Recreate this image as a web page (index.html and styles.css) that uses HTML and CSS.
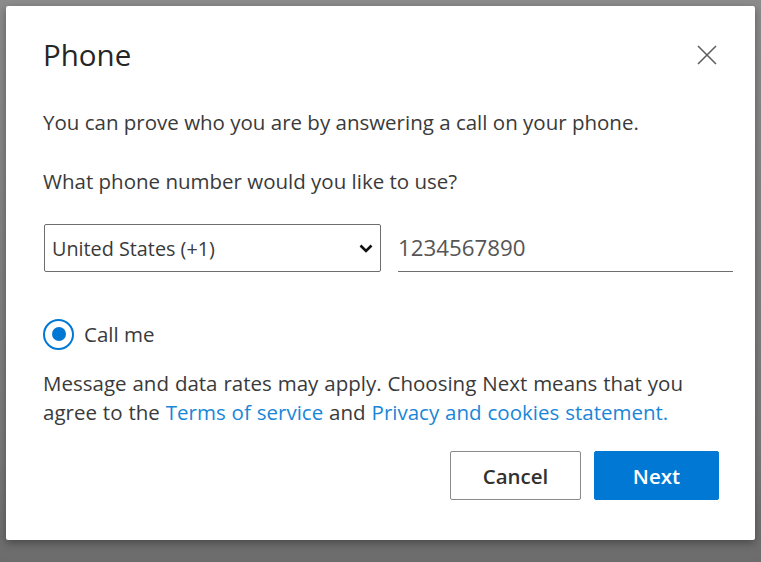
FILE: index.html
```html
<!DOCTYPE html>
<html lang="en">
<head>
    <meta charset="UTF-8">
    <meta name="viewport" content="width=device-width, initial-scale=1.0">
    <title>Phone</title>
    <link rel="stylesheet" href="styles.css">
</head>
<body>
    <div class="dialog">
        <div class="dialog-header">
            <h1 class="dialog-title">Phone</h1>
            <button type="button" class="close-btn" aria-label="Close">
                <svg width="20" height="20" viewBox="0 0 20 20">
                    <path d="M1 1 L19 19 M19 1 L1 19" stroke="#5f5f5f" stroke-width="1.6" fill="none"/>
                </svg>
            </button>
        </div>

        <p class="intro">You can prove who you are by answering a call on your phone.</p>
        <p class="question">What phone number would you like to use?</p>

        <div class="phone-row">
            <div class="select-wrap">
                <select class="country">
                    <option>United States (+1)</option>
                </select>
                <svg class="chevron" width="14" height="9" viewBox="0 0 14 9">
                    <path d="M1.5 1.5 L7 7 L12.5 1.5" stroke="#111" stroke-width="2.6" fill="none"/>
                </svg>
            </div>
            <input type="text" class="phone-input" value="1234567890">
        </div>

        <label class="radio-row">
            <span class="radio"><span class="radio-dot"></span></span>
            <span class="radio-label">Call me</span>
        </label>

        <div class="notice">
            <div class="notice-line">Message and data rates may apply. Choosing Next means that you</div>
            <div class="notice-line"><span>agree to the</span> <a href="#">Terms of service</a> <span>and</span> <a href="#">Privacy and cookies statement.</a></div>
        </div>

        <div class="actions">
            <button type="button" class="btn btn-cancel">Cancel</button>
            <button type="button" class="btn btn-next">Next</button>
        </div>
    </div>
</body>
</html>
```

FILE: styles.css
```css
body {
    margin: 0;
    padding: 0;
    height: 562px;
    overflow: hidden;
    background: linear-gradient(#8c8c8c, #7a7a7a 80%, #6c6c6c);
    font-family: "Open Sans", "Noto Sans", sans-serif;
    color: #3a3a3a;
}

.dialog {
    margin: 6px 0 0 6px;
    width: 749px;
    height: 534px;
    box-sizing: border-box;
    padding: 30px 22px 0 37px;
    background-color: #fff;
    border-radius: 2px;
    box-shadow: 0 3px 8px rgba(0, 0, 0, 0.35);
}

.dialog-header {
    display: flex;
    justify-content: space-between;
    align-items: center;
    height: 38px;
}

.dialog-title {
    margin: 0;
    font-size: 29.5px;
    font-weight: 400;
    line-height: 38px;
    color: #262626;
}

.close-btn {
    border: none;
    background: none;
    padding: 0;
    margin-right: 16px;
    width: 20px;
    height: 20px;
    cursor: pointer;
}

.close-btn svg {
    display: block;
}

p {
    margin: 0;
    font-size: 20.5px;
    line-height: 28px;
}

.intro {
    margin-top: 34px;
}

.question {
    margin-top: 31px;
}

.phone-row {
    display: flex;
    align-items: stretch;
    gap: 17px;
    margin-top: 29px;
    padding-left: 1px;
    height: 48px;
}

.select-wrap {
    position: relative;
    width: 337px;
}

.country {
    appearance: none;
    -webkit-appearance: none;
    width: 100%;
    height: 100%;
    box-sizing: border-box;
    border: 1px solid #6e6e6e;
    border-radius: 2px;
    background: #fff;
    padding: 0 0 0 7px;
    font-family: inherit;
    font-size: 19.8px;
    color: #3a3a3a;
}

.chevron {
    position: absolute;
    right: 8px;
    top: 20px;
}

.phone-input {
    width: 335px;
    box-sizing: border-box;
    border: none;
    border-bottom: 1px solid #6e6e6e;
    padding: 0;
    font-family: inherit;
    font-size: 22.3px;
    color: #555;
    outline: none;
}

.radio-row {
    display: flex;
    align-items: center;
    gap: 10px;
    margin-top: 46px;
    height: 32px;
}

.radio {
    width: 31px;
    height: 31px;
    box-sizing: border-box;
    border: 2px solid #0078d4;
    border-radius: 50%;
    display: flex;
    align-items: center;
    justify-content: center;
}

.radio-dot {
    width: 14px;
    height: 14px;
    border-radius: 50%;
    background-color: #0078d4;
}

.radio-label {
    font-size: 20.5px;
}

.notice {
    margin-top: 19px;
    font-size: 20.5px;
    line-height: 29px;
    word-spacing: 0.6px;
}

.notice-line {
    white-space: nowrap;
}

.notice a {
    color: #1a86d8;
    text-decoration: none;
}

.actions {
    display: flex;
    justify-content: flex-end;
    gap: 13px;
    margin-top: 24px;
    padding-right: 14px;
}

.btn {
    height: 49px;
    border-radius: 2px;
    font-family: inherit;
    font-size: 20.5px;
    font-weight: 600;
    cursor: pointer;
}

.btn-cancel {
    width: 131px;
    background: #fff;
    border: 1px solid #8a8a8a;
    color: #323130;
}

.btn-next {
    width: 125px;
    background-color: #0078d4;
    border: 1px solid #0078d4;
    color: #fff;
}
```
